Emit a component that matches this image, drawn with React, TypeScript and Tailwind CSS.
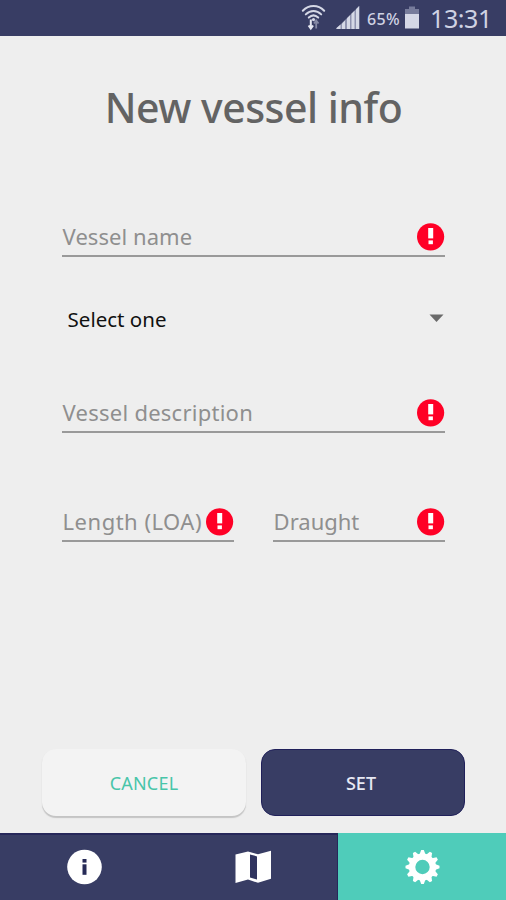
import type { ReactNode } from "react";

interface FieldProps {
  label: string;
  labelClass: string;
  className?: string;
}

interface TabProps {
  name: string;
  active?: boolean;
  children: ReactNode;
}

const GEAR_TEETH = Array.from({ length: 12 }, (_, i) => i * 30);

function ErrorIcon() {
  return (
    <svg viewBox="0 0 28 29" className="h-[29px] w-7 shrink-0">
      <circle cx="13.6" cy="14.8" r="13.6" fill="#ff0026" />
      <rect x="11.2" y="6" width="5" height="10.4" fill="#fff" />
      <rect x="11.5" y="18.4" width="4.4" height="3.8" fill="#fff" />
    </svg>
  );
}

function Field({ label, labelClass, className = "" }: FieldProps) {
  return (
    <div
      className={`flex h-[35px] justify-between border-b-2 border-[#999999] ${className}`}
    >
      <span
        className={`whitespace-nowrap pl-[0.6px] leading-[28px] text-[#8f8f8f] ${labelClass}`}
      >
        {label}
      </span>
      <ErrorIcon />
    </div>
  );
}

function StatusBar() {
  return (
    <div className="flex h-9 items-center bg-[#383d64] pl-[301px] text-[#cfd2e3]">
      <svg viewBox="0 0 26 26" className="h-[26px] w-[26px]" fill="none">
        <g stroke="#d5d8e6" strokeWidth="2" strokeLinecap="round">
          <path d="M1.8 5.8C8 -0.6 17 -0.6 23.2 5.8" />
          <path d="M4.8 9.4C9.4 4.8 15.6 4.8 20.2 9.4" />
          <path d="M7.8 12.6C10.8 9.8 14.2 9.8 17.2 12.6" />
        </g>
        <circle cx="12.5" cy="14.6" r="1.6" fill="#d5d8e6" />
        <path d="M9.8 14.5V23M7.6 20.5l2.2 3 2.3-3" stroke="#e7e9f2" strokeWidth="2" />
        <path d="M15.2 23.5V16M13 18.5l2.2-3 2.3 3" stroke="#8589a5" strokeWidth="1.8" />
      </svg>
      <svg viewBox="0 0 24 24" className="ml-[9px] h-6 w-6">
        <path d="M0 23L23.2 0v23z" fill="#8f93b0" />
        <g fill="#d5d8e6">
          <path d="M0.5 23v-1l4-3.6V23z" />
          <path d="M6 23v-5.5l3-3V23z" />
          <path d="M11 23V12.3l3-3V23z" />
          <path d="M15.5 23V7.8l3-3V23z" />
          <path d="M20 23V3.2L23.2 0v23z" />
        </g>
      </svg>
      <span className="ml-[7px] w-[34px] whitespace-nowrap pt-px text-[16px] font-medium tracking-[0.3px]">
        65%
      </span>
      <svg viewBox="0 0 16 24" className="ml-[3px] h-6 w-4">
        <path d="M5 0.5h6V3h4v5H1V3h4z" fill="#777c9b" />
        <path d="M1 8h14v14.5H1z" fill="#d5d8e6" />
      </svg>
      <span className="ml-[10px] whitespace-nowrap pt-0.5 text-[25px] tracking-[-0.4px]">
        13:31
      </span>
    </div>
  );
}

function Tab({ name, active = false, children }: TabProps) {
  return (
    <button
      aria-label={name}
      className={`flex items-center justify-center ${
        active
          ? "bg-[#4fccba]"
          : "bg-[#383d64] shadow-[inset_0_2px_0_#27285a]"
      }`}
    >
      {children}
    </button>
  );
}

export default function App() {
  return (
    <div className="flex h-[900px] w-[506px] flex-col overflow-hidden bg-[#eeeeee] font-['Noto_Sans',sans-serif]">
      <StatusBar />

      <main className="flex flex-1 flex-col">
        <h1 className="mt-[41px] h-[60px] whitespace-nowrap pl-px text-center text-[41px] font-medium leading-[60px] tracking-[-0.5px] text-[#636363]">
          New vessel info
        </h1>

        {/* Form */}
        <form className="mt-[85px] flex flex-col pl-[62px] pr-[61px]">
          <Field label="Vessel name" labelClass="text-[22px] tracking-[0.05px]" />

          <div className="mt-[46px] flex h-8 items-center justify-between pl-[5.6px]">
            <span className="whitespace-nowrap text-[20.5px] text-[#111111]">
              Select one
            </span>
            <svg viewBox="0 0 15 8" className="mb-0.5 mr-px h-2 w-[15px]">
              <path d="M0.5 0.5h14L7.5 8z" fill="#6a6a6a" />
            </svg>
          </div>

          <Field
            label="Vessel description"
            labelClass="text-[22px] tracking-[0.25px]"
            className="mt-[63px]"
          />

          <div className="mt-[74px] grid grid-cols-[172px_172px] justify-between">
            <Field
              label="Length (LOA)"
              labelClass="text-[22px] tracking-[0.5px]"
            />
            <Field label="Draught" labelClass="text-[22px]" />
          </div>
        </form>

        {/* Actions */}
        <div className="mb-[17px] mt-auto grid grid-cols-2 gap-[15px] pl-[42px] pr-[41px] text-[18px]">
          <button className="h-[67px] rounded-[14px] bg-[#f3f3f3] pt-px text-[#48c5a9] shadow-[0_1.5px_1px_#c4c4c4]">
            <span className="tracking-[0.2px]">CANCEL</span>
          </button>
          <button className="h-[67px] rounded-[14px] border border-[#20205a] bg-[#383d64] pt-px pr-1 font-medium text-[#e6e8f3]">
            SET
          </button>
        </div>
      </main>

      {/* Bottom navigation */}
      <nav className="grid h-[67px] grid-cols-[338px_168px]">
        <div className="grid grid-cols-2 border-r border-[#27285a]">
          <Tab name="Info">
            <svg viewBox="0 0 36 36" className="h-9 w-9">
              <circle cx="18.5" cy="18" r="17.3" fill="#fff" />
              <rect x="16.5" y="10" width="4" height="3.6" fill="#262a57" />
              <rect x="16.5" y="15.3" width="4" height="10.5" fill="#262a57" />
            </svg>
          </Tab>
          <Tab name="Map">
            <svg viewBox="0 0 36 34" className="h-[34px] w-9" fill="#fff">
              <path d="M0.5 4.5L13 1.5v28L0.5 33z" />
              <path d="M13 1.5l10 2.8v28.5l-10-3.3z" />
              <path d="M15 4.4l7 2v23.2l-7-2.2z" fill="#30345f" />
              <path d="M23 4.3L36 0.8v28L23 32.8z" />
            </svg>
          </Tab>
        </div>
        <Tab name="Settings" active>
          <svg viewBox="-18 -18 36 36" className="h-9 w-9">
            {GEAR_TEETH.map((angle) => (
              <path
                key={angle}
                d="M-3 -12.5L-1.3 -17H1.3L3 -12.5z"
                fill="#fff"
                transform={`translate(0.5 0) rotate(${angle})`}
              />
            ))}
            <circle cx="0.5" r="10.4" fill="none" stroke="#fff" strokeWidth="6.4" />
          </svg>
        </Tab>
      </nav>
    </div>
  );
}
